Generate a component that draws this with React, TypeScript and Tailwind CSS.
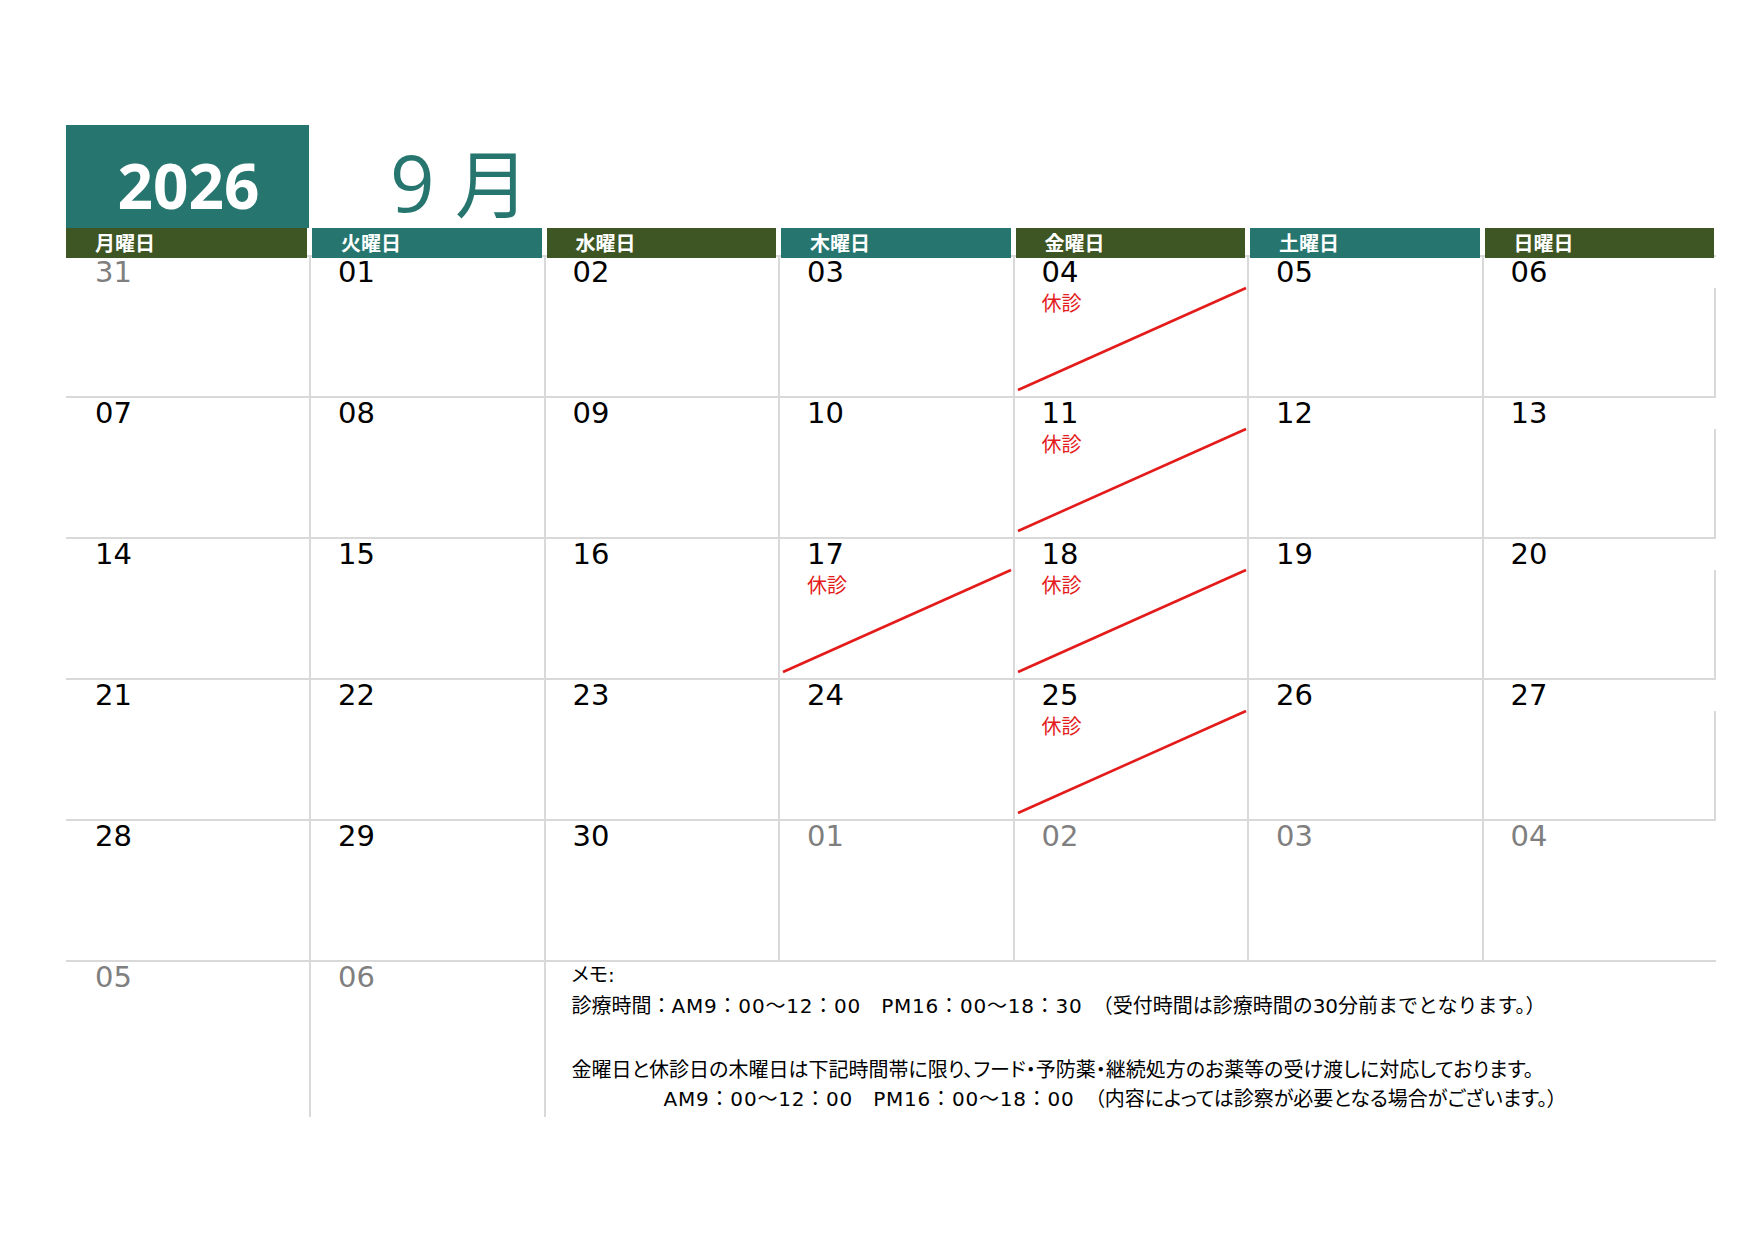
import React from 'react'

type Day = { d: string; muted?: boolean; closed?: boolean }

const WEEKDAYS = ['月曜日', '火曜日', '水曜日', '木曜日', '金曜日', '土曜日', '日曜日']

const n = (d: string, muted = false, closed = false): Day => ({ d, muted, closed })

const WEEKS: Day[][] = [
    [n('31', true), n('01'), n('02'), n('03'), n('04', false, true), n('05'), n('06')],
    [n('07'), n('08'), n('09'), n('10'), n('11', false, true), n('12'), n('13')],
    [n('14'), n('15'), n('16'), n('17', false, true), n('18', false, true), n('19'), n('20')],
    [n('21'), n('22'), n('23'), n('24'), n('25', false, true), n('26'), n('27')],
    [n('28'), n('29'), n('30'), n('01', true), n('02', true), n('03', true), n('04', true)]
]

const GRID = 'grid grid-cols-[243px_repeat(6,234.5px)]'
const NUM = "font-['DejaVu_Sans',sans-serif] text-[29px] leading-[30px]"
const JP = "font-['Noto_Sans_CJK_JP',sans-serif]"
const PALT = "[font-feature-settings:'palt']"

function ClosedSlash() {
    return (
        <svg className="pointer-events-none absolute inset-0 h-full w-full" aria-hidden>
            <line x1="3" y1="133" x2="231" y2="31" stroke="#e31b1b" strokeWidth="2.6" />
        </svg>
    )
}

function DayCell({ day, col, edge }: { day: Day; col: number; edge: boolean }) {
    return (
        <div className={`relative flex flex-col ${col === 0 ? 'pl-[29px]' : 'border-l-2 border-[#d9d9d9] pl-[27px]'}`}>
            <div className={`h-[31px] ${NUM} ${day.muted ? 'text-[#7f7f7f]' : 'text-black'}`}>{day.d}</div>
            <div className={`flex-1 ${edge ? 'border-r-2 border-[#d9d9d9]' : ''}`}>
                {day.closed && <div className={`mt-[5px] ${JP} text-[20px] leading-[20px] text-[#e31b1b]`}>休診</div>}
            </div>
            {day.closed && <ClosedSlash />}
        </div>
    )
}

function Hours({ children }: { children: React.ReactNode }) {
    return <span className="tracking-[0.8px]">{children}</span>
}

export default function App() {
    return (
        <div className="min-h-screen bg-white pl-[66px] pt-[125px] font-['Open_Sans','Noto_Sans_CJK_JP',sans-serif] text-black">
            <div className="flex items-start">
                <div className="h-[103px] w-[243px] bg-[#26766f] pl-[2px] pt-[29px] text-center text-[62px] font-bold leading-[62px] text-white">
                    2026
                </div>
                <div className="ml-[81px] mt-[16px] text-[78px] leading-[78px] text-[#26766f]">
                    9 <span className={`${JP} text-[74px]`}>月</span>
                </div>
            </div>

            <div className="w-[1650px]">
                <div className={`${GRID} h-[27px]`}>
                    {WEEKDAYS.map((w, i) => (
                        <div
                            key={w}
                            className={`flex items-center pl-[29px] ${JP} text-[20px] font-bold text-white ${
                                i === 0 ? 'mr-[2px]' : 'ml-[3px] mr-[2px]'
                            } ${i % 2 === 0 ? 'bg-[#3d5623]' : 'bg-[#26766f]'}`}
                        >
                            {w}
                        </div>
                    ))}
                </div>

                {WEEKS.map((week, r) => (
                    <div key={r} className={`${GRID} h-[141px] border-t-2 border-[#d9d9d9]`}>
                        {week.map((day, c) => (
                            <DayCell key={c} day={day} col={c} edge={c === 6 && r < 4} />
                        ))}
                    </div>
                ))}

                <div className={`${GRID} h-[157px] border-t-2 border-[#d9d9d9]`}>
                    <div className={`pl-[29px] ${NUM} text-[#7f7f7f]`}>05</div>
                    <div className={`border-l-2 border-[#d9d9d9] pl-[27px] ${NUM} text-[#7f7f7f]`}>06</div>
                    <div className="col-span-5 border-l-2 border-[#d9d9d9] pl-[26px] font-['DejaVu_Sans','Noto_Sans_CJK_JP',sans-serif] text-[20px] leading-[31px]">
                        <div className="-mt-[2px]">
                            <div className={PALT}>メモ:</div>
                            <div className="whitespace-pre">
                                診療時間：<Hours>AM9：00～12：00</Hours>　<Hours>PM16：00～18：30</Hours>　（受付時間は診療時間の30分前までとなります。）
                            </div>
                            <div>&nbsp;</div>
                            <div className={`${JP} ${PALT}`}>
                                金曜日と休診日の木曜日は下記時間帯に限り、フード・予防薬・継続処方のお薬等の受け渡しに対応しております。
                            </div>
                            <div className="ml-[92px] whitespace-pre">
                                <Hours>AM9：00～12：00</Hours>　<Hours>PM16：00～18：00</Hours>　<span className={PALT}>（内容によっては診察が必要となる場合がございます。）</span>
                            </div>
                        </div>
                    </div>
                </div>
            </div>
        </div>
    )
}
